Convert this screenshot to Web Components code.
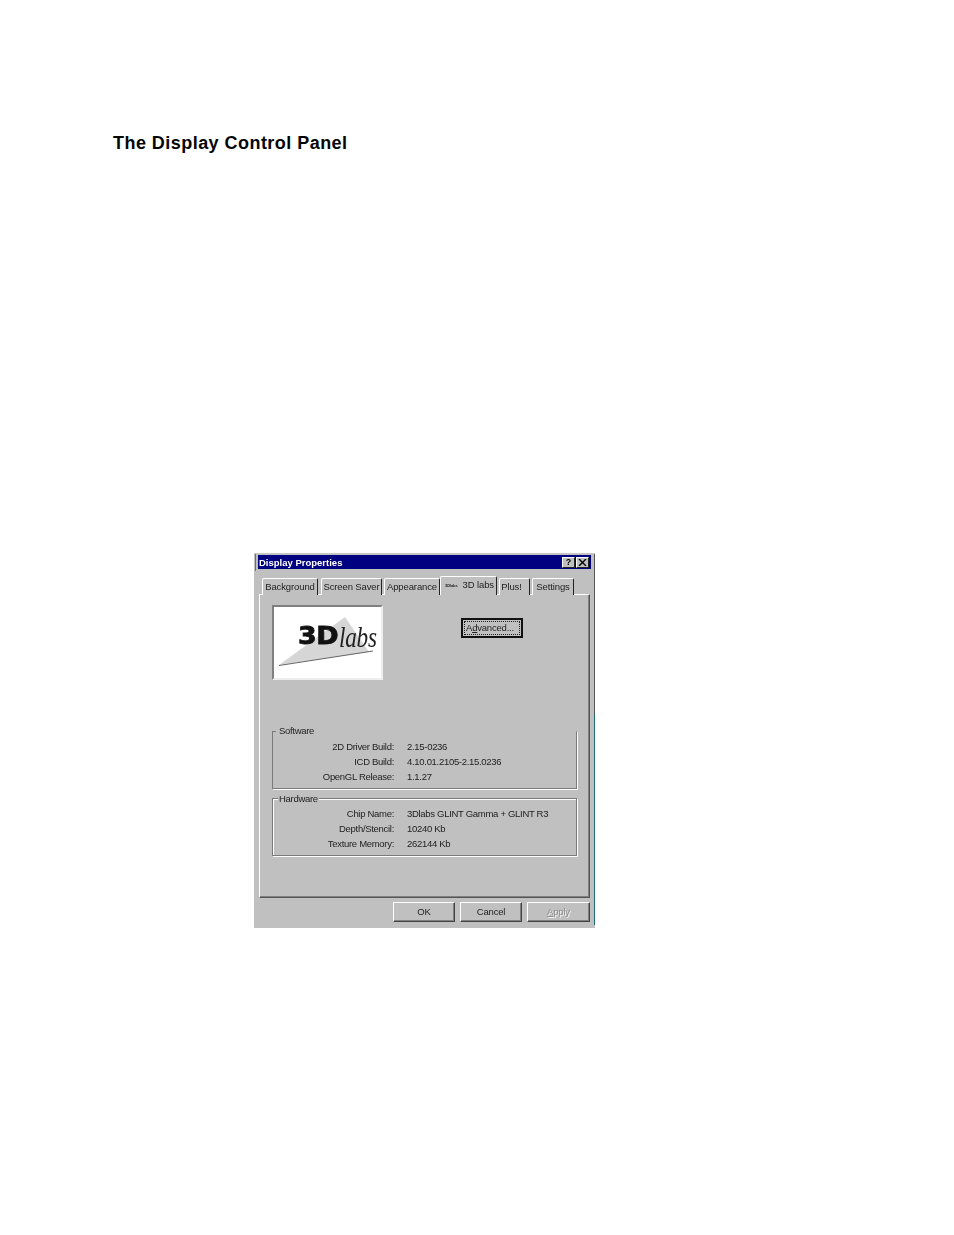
<!DOCTYPE html>
<html>
<head>
<meta charset="utf-8">
<title>The Display Control Panel</title>
<style>
html, body { margin: 0; background: #fff; }
</style>
</head>
<body>
<manual-page>
    <span slot="heading">The Display Control Panel</span>
    <display-properties></display-properties>
</manual-page>

<template id="page-template">
    <style>
    :host { display: block; width: 954px; height: 1235px; box-sizing: border-box; padding: 133px 0 0 113px; background: #fff; }
    h1 { color: #050505; font: bold 18px/20px "Liberation Sans", Arial, sans-serif; letter-spacing: .46px; margin: 0; }
    .figure { margin: 400px 0 0 141px; }
    </style>
    <h1><slot name="heading"></slot></h1>
    <div class="figure"><slot></slot></div>
</template>

<template id="tab-template">
    <style>
    :host { display: block; box-sizing: border-box; height: 17px; background: #c0c0c0; border: 1px solid; border-color: #fff #222 transparent #fff; border-bottom: 0; border-radius: 2px 2px 0 0; color: #222; font-size: 9.5px; letter-spacing: -.12px; line-height: 16px; text-align: center; white-space: nowrap; }
    :host([active]) { height: 19px; line-height: 15px; position: relative; z-index: 1; }
    </style>
    <slot></slot>
</template>

<template id="button-template">
    <style>
    :host { display: flex; align-items: center; justify-content: center; box-sizing: border-box; width: 62px; height: 20px; padding-bottom: 1px; background: #c0c0c0; border: 1px solid; border-color: #fff #444 #444 #fff; box-shadow: inset -1px -1px 0 #808080; color: #222; font-size: 9.5px; letter-spacing: -.2px; }
    :host([disabled]) { color: #8e8e8e; text-shadow: 1px 1px 0 #f2f2f2; }
    :host([focused]) { border: 2px solid #111; box-shadow: none; outline: 1px dotted #222; outline-offset: -4px; padding-right: 4px; }
    </style>
    <slot></slot>
</template>

<template id="group-template">
    <style>
    :host { display: block; position: relative; box-sizing: border-box; margin: 0 12px; border: 1px solid #7a7a7a; box-shadow: 1px 1px 0 #fff, inset 1px 1px 0 #fff; padding: 8px 0 5px; }
    :host([open-top]) { border-top-color: transparent; box-shadow: 1px 1px 0 #fff; }
    :host([open-top])::before { content: ''; position: absolute; left: -1px; top: -1px; width: 4px; height: 1px; background: #7a7a7a; }
    :host([open-top]) .label { top: -8px; }
    .label { position: absolute; left: 5px; top: -7px; padding: 0 1px; background: #c0c0c0; font-size: 9.5px; letter-spacing: -.3px; line-height: 13px; color: #222; }
    .rows { display: grid; grid-template-columns: 121px 1fr; column-gap: 13px; row-gap: 2px; }
    </style>
    <div class="label"><slot name="label"></slot></div>
    <div class="rows"><slot></slot></div>
</template>

<template id="row-template">
    <style>
    :host { display: contents; font-size: 9.5px; letter-spacing: -.3px; line-height: 13px; color: #222; }
    .k { text-align: right; }
    </style>
    <div class="k"></div><div class="v"></div>
</template>

<template id="dialog-template">
    <style>
    :host { display: block; box-sizing: border-box; width: 341px; height: 375px; padding: 1px 4px 0; background: linear-gradient(#2a8a8a, #2a8a8a) 1px 0 / 1px 17px no-repeat, linear-gradient(#555, #555) 100% 0 / 1px 160px no-repeat, linear-gradient(#1c6e6e, #1c6e6e) 100% 160px / 1px 211px no-repeat, #c0c0c0; border-top: 1px solid #c8c8c8; font-family: "Liberation Sans", Arial, sans-serif; color: #222; filter: blur(.3px); }
    .title { display: flex; align-items: center; justify-content: space-between; height: 14px; padding: 0 2px 0 1px; background: #000080; color: #fff; font-size: 9.5px; font-weight: bold; }
    .controls { display: flex; gap: 1px; }
    .ctl { box-sizing: border-box; width: 13px; height: 11px; background: #c0c0c0; border: 1px solid; border-color: #fff #222 #222 #fff; color: #000; font-size: 9px; font-weight: bold; line-height: 9px; text-align: center; }
    .ctl svg { display: block; margin: 1px auto 0; }
    .tabs { display: flex; align-items: flex-end; height: 19px; margin: 7px 0 0 4px; position: relative; z-index: 1; }
    .panel { box-sizing: border-box; height: 304px; margin: -1px 1px 0 1px; border: 1px solid; border-color: #fff #555 #555 #fff; box-shadow: inset -1px -1px 0 #808080; padding: 10px 0 0; }
    .top { display: flex; align-items: flex-start; height: 126px; }
    .logo { box-sizing: border-box; width: 111px; height: 75px; margin-left: 12px; background: #fff; border: 2px solid; border-color: #808080 #eee #eee #808080; position: relative; overflow: hidden; }
    .logo svg { position: absolute; inset: 0; }
    .logo .three { position: absolute; left: 24px; top: 14px; font: bold 24px/30px "DejaVu Sans", sans-serif; color: #111; letter-spacing: -.4px; -webkit-text-stroke: .8px #111; transform: scaleX(1.12); transform-origin: 0 50%; }
    .logo .labs { position: absolute; left: 65px; top: 15px; font: italic 29px/30px "Liberation Serif", "Times New Roman", serif; color: #222; letter-spacing: -.3px; transform: scaleX(.8); transform-origin: 0 50%; }
    .adv { margin: 13px 0 0 78px; }
    .stack { display: flex; flex-direction: column; gap: 9px; }
    .foot { display: flex; justify-content: flex-end; gap: 5px; margin: 4px 1px 0 0; }
    .icon { font-size: 4px; font-weight: bold; letter-spacing: -.1px; margin: 0 5px 0 2px; vertical-align: 1px; }
    .plus { padding-right: 6px; }
    </style>
    <div class="title">
        <span>Display Properties</span>
        <div class="controls">
            <div class="ctl">?</div>
            <div class="ctl"><svg width="9" height="7" viewBox="0 0 9 7"><path d="M1 0l7 7M8 0l-7 7" stroke="#000" stroke-width="1.4" fill="none"/></svg></div>
        </div>
    </div>
    <div class="tabs">
        <win-tab style="width:56px">Background</win-tab>
        <win-tab style="width:61px;margin-left:3px">Screen Saver</win-tab>
        <win-tab style="width:56px;margin-left:2px">Appearance</win-tab>
        <win-tab active style="width:57px"><span class="icon">3Dlabs</span>3D labs</win-tab>
        <win-tab style="width:31px;margin-left:2px"><span class="plus">Plus!</span></win-tab>
        <win-tab style="width:42px;margin-left:2px">Settings</win-tab>
    </div>
    <div class="panel">
        <div class="top">
            <div class="logo">
                <svg width="107" height="71" viewBox="0 0 107 71">
                    <path d="M5 58L71 10l24 35z" fill="#d6d6d6"/>
                    <path d="M5 58.5L99 44" stroke="#666" stroke-width="1" fill="none"/>
                </svg>
                <span class="three">3D</span><span class="labs">labs</span>
            </div>
            <win-button class="adv" focused><span>A<u>d</u>vanced...</span></win-button>
        </div>
        <div class="stack">
            <win-group open-top>
                <span slot="label">Software</span>
                <info-row k="2D Driver Build:" v="2.15-0236"></info-row>
                <info-row k="ICD Build:" v="4.10.01.2105-2.15.0236"></info-row>
                <info-row k="OpenGL Release:" v="1.1.27"></info-row>
            </win-group>
            <win-group>
                <span slot="label">Hardware</span>
                <info-row k="Chip Name:" v="3Dlabs GLINT Gamma + GLINT R3"></info-row>
                <info-row k="Depth/Stencil:" v="10240 Kb"></info-row>
                <info-row k="Texture Memory:" v="262144 Kb"></info-row>
            </win-group>
        </div>
    </div>
    <div class="foot">
        <win-button>OK</win-button>
        <win-button>Cancel</win-button>
        <win-button disabled style="width:63px"><span><u>A</u>pply</span></win-button>
    </div>
</template>

<script>
function tpl(id) {
    return document.getElementById(id).content.cloneNode(true);
}

class Simple extends HTMLElement {
    constructor() {
        super();
        this.attachShadow({ mode: 'open' });
        this.shadowRoot.append(tpl(this.constructor.templateId));
    }
}

class ManualPage extends Simple { static templateId = 'page-template'; }
class WinTab extends Simple { static templateId = 'tab-template'; }
class WinButton extends Simple { static templateId = 'button-template'; }
class WinGroup extends Simple { static templateId = 'group-template'; }
class DisplayProperties extends Simple { static templateId = 'dialog-template'; }

class InfoRow extends Simple {
    static templateId = 'row-template';
    connectedCallback() {
        this.shadowRoot.querySelector('.k').textContent = this.getAttribute('k');
        this.shadowRoot.querySelector('.v').textContent = this.getAttribute('v');
    }
}

customElements.define('manual-page', ManualPage);
customElements.define('win-tab', WinTab);
customElements.define('win-button', WinButton);
customElements.define('win-group', WinGroup);
customElements.define('info-row', InfoRow);
customElements.define('display-properties', DisplayProperties);
</script>
</body>
</html>
